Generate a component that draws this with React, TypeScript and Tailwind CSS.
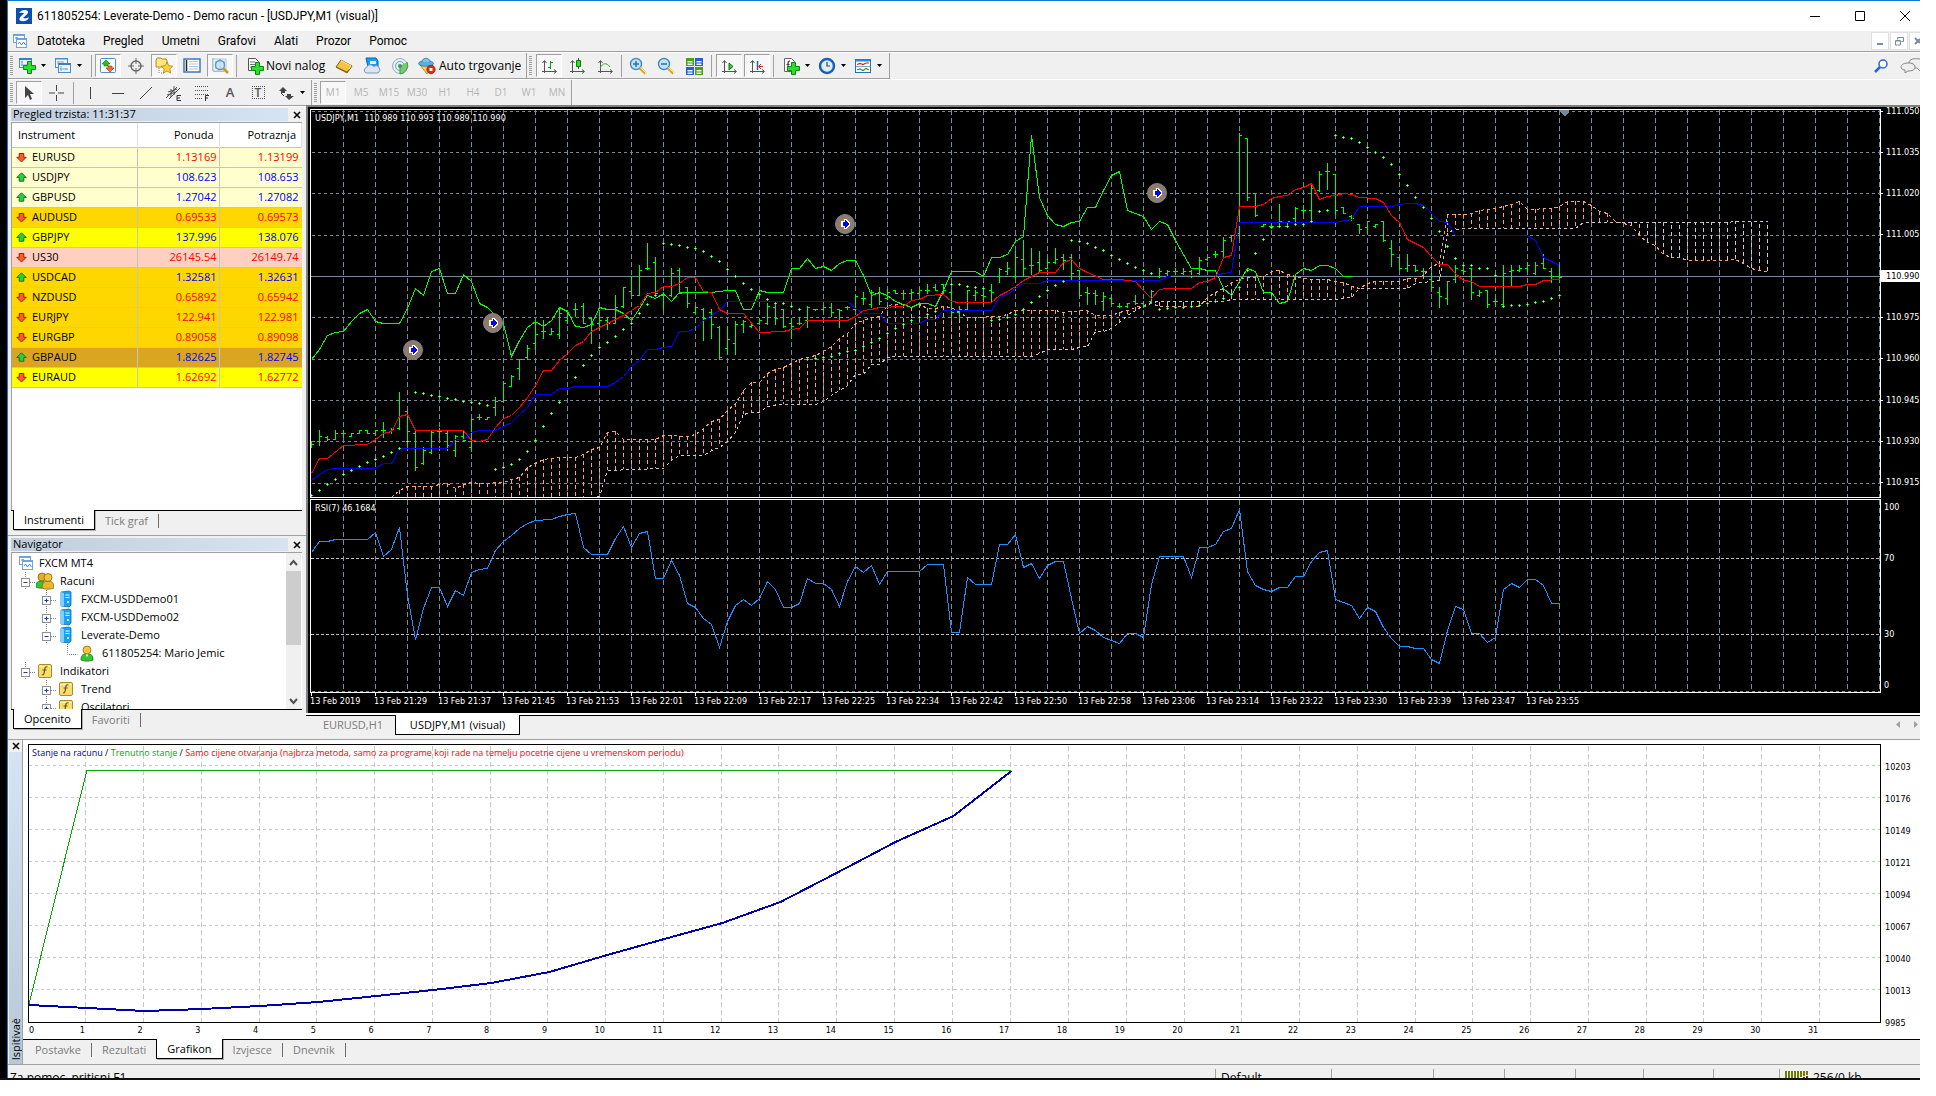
import React from "react";

type Pt = [number, number];

const parse = (s: string): Pt[] =>
  s.split(" ").map((p) => p.split(",").map(Number) as Pt);

const at = (pts: Pt[], i: number): number => {
  for (let k = 1; k < pts.length; k++) {
    const [x0, y0] = pts[k - 1];
    const [x1, y1] = pts[k];
    if (i >= x0 && i <= x1) return Math.round(y0 + ((y1 - y0) * (i - x0)) / (x1 - x0));
  }
  return 400;
};

const BAR = 8;
const toPoints = (pts: Pt[]) => pts.map(([i, y]) => `${i * BAR + 0.5},${y + 0.5}`).join(" ");

/* open, high, low, close for every one minute bar */
const BARS: number[][] = (
  "344,341,347,344 341,330,345,336 337,336,340,339 339,330,339,333 333,330,337,333 336,333,336,333 333,330,333,330 330,330,333,333 333,330,335,330 330,322,337,330 " +
  "331,328,333,329 328,292,329,316 311,311,345,331 333,331,370,367 363,347,364,350 352,331,353,332 331,328,337,331 333,331,350,345 350,335,356,336 336,330,341,340 " +
  "347,319,351,319 317,314,319,317 319,317,319,317 307,297,315,301 301,281,301,283 286,275,286,276 268,259,279,259 257,245,259,248 243,220,249,234 231,220,238,231 " +
  "234,228,234,231 234,207,238,213 220,212,223,214 209,203,216,209 206,203,223,223 218,217,243,224 223,212,228,220 220,217,229,223 223,195,223,207 206,187,207,187 " +
  "191,176,195,195 195,165,195,170 168,143,169,168 162,157,195,193 195,192,209,195 195,168,196,173 170,168,193,193 187,187,207,203 212,206,213,207 209,208,240,218 " +
  "212,209,238,224 227,226,259,257 248,226,254,239 243,221,254,224 224,220,232,221 226,222,227,225 223,218,224,220 223,203,224,206 207,205,224,218 209,209,227,226 " +
  "223,218,238,226 223,217,224,223 220,206,227,207 209,209,210,209 209,205,210,207 207,203,216,212 209,209,227,210 207,206,209,207 209,195,210,196 198,192,204,198 " +
  "204,190,207,192 193,187,204,201 198,189,199,192 190,190,193,193 193,190,199,193 193,189,199,192 193,187,195,190 190,184,193,190 187,184,190,190 184,184,193,190 " +
  "192,189,217,212 212,206,218,209 209,190,210,190 195,190,200,192 195,187,201,196 190,184,201,192 176,168,182,169 171,162,174,168 176,151,177,157 159,140,176,168 " +
  "165,148,174,165 162,151,171,170 168,159,168,162 162,148,163,159 157,154,169,160 157,154,180,173 170,170,196,195 192,187,204,193 193,190,204,195 201,192,210,196 " +
  "198,195,204,203 206,203,207,206 206,203,207,203 201,195,204,203 203,201,207,206 201,190,203,191 176,168,177,171 173,170,175,171 171,168,176,171 173,168,174,171 " +
  "171,170,177,175 173,157,174,160 159,157,160,157 154,151,157,154 151,137,156,140 137,135,141,135 133,33,138,35 38,38,100,97 93,93,116,115 126,124,126,124 " +
  "126,124,127,126 126,104,126,121 126,122,126,121 118,107,122,108 110,105,113,110 110,85,122,88 90,71,91,74 71,63,89,71 74,74,113,110 107,107,113,113 " +
  "116,115,120,118 124,124,133,129 127,121,133,121 126,124,127,124 121,121,141,140 148,140,166,154 157,157,169,168 168,154,171,165 165,165,171,170 171,168,174,171 " +
  "179,174,191,187 192,187,207,196 198,181,204,181 179,165,182,168 170,165,174,171 168,168,199,192 195,190,196,192 190,190,207,204 201,198,204,201 204,165,204,173 " +
  "171,165,185,170 170,165,171,168 168,162,171,165 173,162,174,165 163,154,168,168 171,168,182,176 176,165,180,177"
)
  .split(" ")
  .map((b) => b.split(",").map(Number));

const LAGGING = parse(
  "0,259 1,249 2,235 3,232 4,231 5,221 6,213 7,209 8,221 9,223 11,223 12,208 13,188 14,195 15,171 16,168 17,193 18,193 19,174 20,181 21,203 22,207 23,215 24,223 25,256 26,240 27,227 28,221 29,226 30,220 31,207 32,211 33,226 34,227 35,224 36,207 37,209 38,209 39,213 40,220 41,208 42,195 43,198 44,193 45,201 46,192 50,192 51,191 52,190 53,190 54,209 55,209 56,190 57,192 59,192 60,168 61,168 62,158 63,168 64,166 65,170 66,163 67,160 68,160 69,175 70,195 71,192 72,195 73,201 74,204 75,207 76,203 77,203 78,206 79,190 80,171 83,171 84,176 85,157 86,157 87,154 88,141 89,136 90,35 91,97 92,115 93,124 94,126 95,122 96,121 97,107 98,107 99,90 100,75 101,71 102,110 103,113 104,116 105,129 106,121 107,124 108,140 109,154 110,168 111,168 112,170 113,170 114,188 115,195 116,181 117,168 118,171 119,192 120,192 121,203 122,201 123,174 124,168 125,170 126,165 127,165 128,168 129,176 130,176",
);
const FAST = parse(
  "0,373 1,358 2,358 4,345 7,344 8,339 9,333 10,331 11,316 12,314 13,330 19,330 20,340 21,341 22,339 23,327 24,318 25,315 26,307 27,297 28,285 29,270 30,270 31,260 32,253 33,245 34,241 35,231 36,227 37,223 38,219 39,215 40,210 41,205 42,193 43,192 44,186 45,186 46,183 47,177 48,177 49,191 50,192 51,209 52,213 54,213 56,232 59,231 60,229 61,228 62,220 67,220 68,216 69,210 70,209 71,207 74,206 75,200 76,199 77,195 79,194 80,201 81,202 85,202 86,195 87,191 88,186 89,180 90,176 91,172 93,172 94,162 95,159 96,168 97,172 99,179 101,179 103,181 104,190 105,198 106,189 107,188 110,188 111,182 112,181 113,177 114,157 115,155 116,106 118,106 119,104 120,98 121,96 122,95 123,89 124,87 125,83 126,99 127,96 128,95 129,93 130,94 131,97 133,98 134,102 135,115 136,122 137,139 138,143 139,147 140,156 141,164 142,164 143,173 144,180 145,181 146,186 151,186 152,184 153,184 154,180 156,179",
);
const SLOW = parse(
  "0,380 1,374 2,369 3,368 8,368 9,363 10,363 11,348 17,348 18,339 19,339 20,332 21,330 23,330 24,326 25,322 26,314 27,307 28,294 30,294 31,288 32,288 33,286 37,286 38,282 39,276 40,266 41,260 42,249 43,249 44,247 45,246 46,231 47,231 48,228 49,220 50,215 51,210 52,201 67,201 68,208 69,213 71,213 72,223 76,223 77,219 78,219 79,210 85,210 86,197 87,194 88,188 89,183 91,183 92,180 106,180 107,176 108,175 113,175 114,173 115,172 116,122 128,122 130,119 131,106 135,106 136,104 137,103 138,103 139,105 140,113 141,121 142,122 143,135 152,135 153,140 154,157 155,161 156,165",
);
const SAR = parse(
  "0,395 1,390 2,384 3,379 4,374 5,370 6,366 7,362 8,359 9,356 10,352 11,348 12,341 13,292 14,293 15,295 16,296 17,298 18,299 19,301 20,302 21,303 22,305 23,369 24,367 25,364 26,359 27,351 28,340 29,326 30,313 31,302 33,277 34,265 35,255 36,247 37,242 38,236 39,229 40,223 41,213 42,204 43,195 44,143 45,144 46,145 47,147 48,148 49,151 50,156 51,161 52,169 53,176 54,183 55,189 56,194 57,199 58,203 59,203 60,206 61,209 62,259 63,258 64,257 65,256 66,253 67,251 68,250 69,246 70,242 71,238 72,233 73,228 74,224 75,220 76,217 77,214 78,211 80,184 81,184 82,186 83,187 84,188 85,220 86,219 87,217 88,214 89,209 90,202 91,196 92,190 93,185 94,181 95,140 96,141 97,143 98,147 99,150 100,155 101,159 102,163 103,167 104,170 105,173 106,209 107,208 108,207 109,207 110,206 111,205 112,203 113,201 114,198 115,194 116,187 117,170 118,153 119,139 120,127 121,126 122,126 123,124 124,124 125,121 126,111 127,110 128,35 129,37 130,38 131,42 132,47 133,52 134,57 135,64 136,74 137,85 138,97 139,107 140,118 141,131 142,146 143,158 144,165 145,165 146,168 147,168 148,175 149,206 150,205 151,205 152,204 153,202 154,201 155,198 156,195",
);
const SPAN_A = parse(
  "10,397 11,390 12,386 15,386 16,384 17,383 18,388 19,384 20,382 21,383 24,382 25,379 26,377 27,367 28,363 29,359 31,357 33,357 34,354 35,349 36,347 37,332 38,331 39,339 43,339 44,335 45,335 47,336 48,334 49,328 50,321 51,319 52,310 53,303 54,290 55,282 56,282 57,273 58,269 59,267 60,263 61,259 62,257 63,255 64,251 65,246 66,238 67,233 68,223 69,220 70,217 71,216 72,205 73,204 74,204 75,207 76,204 77,208 78,208 79,206 80,207 81,212 82,217 86,216 87,214 88,210 93,210 94,212 95,211 97,210 98,215 100,215 101,212 102,210 103,207 104,205 105,203 106,206 111,206 112,197 113,192 114,188 115,182 116,179 117,177 119,176 120,171 121,170 122,174 123,176 124,178 125,179 127,179 128,181 129,182 130,186 131,188 132,183 133,181 136,181 137,178 138,178 139,175 140,166 141,163 142,114 144,114 145,113 146,110 147,109 148,108 149,106 150,104 151,101 152,109 155,108 156,106 157,101 159,101 160,105 161,111 162,113 163,121 164,123 165,125 166,135 167,142 168,145 169,154 170,157 171,157 172,160 177,160 178,159 179,163 180,168 181,170 182,171",
);
const SPAN_B = parse(
  "10,420 34,420 35,397 36,396 37,370 44,368 45,360 46,355 49,355 50,350 51,347 52,341 53,332 54,314 55,312 56,312 57,306 59,304 63,304 64,301 65,295 66,290 67,285 68,274 69,274 70,264 71,264 72,257 73,256 90,256 91,253 92,249 95,249 96,247 97,246 98,231 99,231 100,228 101,222 102,215 103,210 104,205 105,202 106,201 114,201 115,199 128,199 129,198 130,197 131,188 137,188 138,183 139,182 140,181 141,180 142,132 143,129 144,128 158,128 159,122 177,122 178,121 182,121",
);
const RSI = parse(
  "0,62 1,51 2,51 3,49 7,49 8,42 9,66 10,59 11,37 12,105 13,149 14,118 15,97 16,97 17,116 18,100 19,105 20,82 21,79 22,78 23,60 24,51 25,45 26,38 27,33 28,30 30,29 31,26 32,24 33,23 34,57 35,64 37,64 38,48 39,36 40,57 41,43 42,41 43,88 44,88 45,70 46,85 47,113 48,117 49,128 50,134 51,157 52,131 53,115 54,109 55,115 56,108 57,91 58,99 59,117 60,117 61,113 62,88 63,93 64,93 65,99 66,116 67,91 68,76 69,82 70,75 71,94 72,81 76,81 77,74 79,74 80,142 81,142 82,87 83,94 85,94 86,54 87,54 88,44 89,77 90,73 91,88 92,75 93,71 94,71 95,108 96,143 97,136 98,140 99,147 100,150 101,153 102,143 103,143 104,147 105,94 106,66 109,66 110,87 111,57 112,57 113,54 114,41 115,38 116,19 117,81 118,95 119,99 120,101 121,97 122,97 123,86 124,86 125,71 126,62 127,60 128,109 129,112 130,115 131,128 132,117 133,121 134,137 135,148 136,156 137,156 138,158 139,158 140,169 141,173 142,140 143,116 144,119 145,143 146,143 147,152 148,147 149,99 150,93 151,97 152,89 153,89 154,95 155,113 156,113",
);
const HATCH = Array.from({ length: 172 }, (_, k) => k + 11);
const GRID_X = Array.from({ length: 100 }, (_, k) => (k + 1) * 32 + 0.5);
const GRID_Y = [11, 52, 93, 135, 176, 217, 259, 300, 341, 383];
const PRICES = ["111.050", "111.035", "111.020", "111.005", "110.990", "110.975", "110.960", "110.945", "110.930", "110.915"];
const TIMES = ["2019", "21:29", "21:37", "21:45", "21:53", "22:01", "22:09", "22:17", "22:25", "22:34", "22:42", "22:50", "22:58", "23:06", "23:14", "23:22", "23:30", "23:39", "23:47", "23:55"];

const QUOTES: { s: string; up: boolean; b: string; a: string; bg: string }[] = [
  { s: "EURUSD", up: false, b: "1.13169", a: "1.13199", bg: "bg-[#ffffce]" },
  { s: "USDJPY", up: true, b: "108.623", a: "108.653", bg: "bg-[#ffffce]" },
  { s: "GBPUSD", up: true, b: "1.27042", a: "1.27082", bg: "bg-[#ffffce]" },
  { s: "AUDUSD", up: false, b: "0.69533", a: "0.69573", bg: "bg-[#ffd700]" },
  { s: "GBPJPY", up: true, b: "137.996", a: "138.076", bg: "bg-[#ffff00]" },
  { s: "US30", up: false, b: "26145.54", a: "26149.74", bg: "bg-[#ffd0c0]" },
  { s: "USDCAD", up: true, b: "1.32581", a: "1.32631", bg: "bg-[#ffd700]" },
  { s: "NZDUSD", up: false, b: "0.65892", a: "0.65942", bg: "bg-[#ffd700]" },
  { s: "EURJPY", up: false, b: "122.941", a: "122.981", bg: "bg-[#ffd700]" },
  { s: "EURGBP", up: false, b: "0.89058", a: "0.89098", bg: "bg-[#ffd700]" },
  { s: "GBPAUD", up: true, b: "1.82625", a: "1.82745", bg: "bg-[#daa520]" },
  { s: "EURAUD", up: false, b: "1.62692", a: "1.62772", bg: "bg-[#ffff00]" },
];

/* ---------- icons ---------- */

function Icon({ children, w = 18 }: { children: React.ReactNode; w?: number }) {
  return (
    <svg width={w} height={18} viewBox={`0 0 ${w} 18`} fill="none" className="block shrink-0" aria-hidden="true">
      {children}
    </svg>
  );
}
const Plus = ({ x, y }: { x: number; y: number }) => (
  <path d={`M${x + 4} ${y}h4v4h4v4h-4v4h-4v-4h-4v-4h4z`} fill="#2ee02e" stroke="#0b8a0b" strokeWidth="1" />
);
const NewChart = () => (
  <Icon><rect x="1.500" y="1.500" width="12" height="9" fill="#eaf5ff" stroke="#4a8fc8" /><path d="M1 2h13" stroke="#3b7fbd" strokeWidth="2" /><path d="M4 4v5M3 8h8M3 5h2M9 7h2" stroke="#7ba6c9" /><Plus x={5.5} y={4.5} /></Icon>
);
const Profiles = () => (
  <Icon><rect x="1.500" y="1.500" width="12" height="9" fill="#eaf5ff" stroke="#4a8fc8" /><path d="M1 2h13" stroke="#4a8fc8" /><rect x="4.500" y="6.500" width="12" height="9" fill="#eaf5ff" stroke="#4a8fc8" /><path d="M4 7h13" stroke="#3b7fbd" strokeWidth="2" /><path d="M4 4v3M4 5h6M7 9v5M6 12h8M12 11v2" stroke="#7ba6c9" /></Icon>
);
const MarketIcon = () => (
  <Icon><rect x="1.500" y="1.500" width="15" height="14" rx="1" fill="#fff" stroke="#4a8fc8" /><path d="M7 3l4 4H9v2H5V7H3z" fill="#26c126" stroke="#0b7a0b" strokeWidth=".6" /><path d="M11 15l-4-4h2V9h4v2h2z" fill="#ff6a32" stroke="#a82c00" strokeWidth=".6" /></Icon>
);
const Target = () => (
  <Icon><circle cx="9" cy="9" r="5" stroke="#666" strokeWidth="1.400" /><path d="M9 1v6M9 11v6M1 9h6M11 9h6" stroke="#666" /></Icon>
);
const FolderStar = () => (
  <Icon><path d="M1 3.500V10h11V3.500L11 2H7L6 1H2z" fill="#ffe680" stroke="#b08a10" /><path d="M4 11v6M6 16h3" stroke="#777" strokeDasharray="1 1" /><path d="M12 5l1.800 3.700 4 .5-3 2.800.8 4-3.600-2-3.600 2 .8-4-3-2.800 4-.5z" fill="#ffd23a" stroke="#b0820c" strokeWidth=".8" /></Icon>
);
const DataWin = () => (
  <Icon><rect x="1" y="2" width="16" height="13" fill="#fff" stroke="#2f6fae" strokeWidth="1.400" /><path d="M3.500 3v11" stroke="#222" strokeWidth="1.500" /><path d="M6 4.500h9M6 7h9M6 9.500h9M6 12h9" stroke="#aac6e8" /></Icon>
);
const Tester = () => (
  <Icon><path d="M2 1v13h11" stroke="#7898b8" /><path d="M2 2h13v12H2z" fill="#e8f2fb" stroke="#9ab" strokeWidth=".6" /><path d="M5 4v8M9 2v10M13 4v6" stroke="#7898b8" /><circle cx="9" cy="8" r="4.500" fill="#c5e2f7" fillOpacity=".8" stroke="#5b93c2" strokeWidth="1.300" /><path d="M12 11l5 5" stroke="#c79a1c" strokeWidth="2.500" /></Icon>
);
const NewOrder = () => (
  <Icon><path d="M2.500 1.500h7l3 3v9h-10z" fill="#fff" stroke="#555" /><path d="M4 5h5M4 7.500h7M4 10h5" stroke="#777" /><Plus x={5.5} y={5.5} /></Icon>
);
const Gold = () => (
  <Icon><path d="M1 10L6 3l11 6-5 7z" fill="#f5c542" stroke="#8a5d0a" /><path d="M1 10l11 5 5-6" stroke="#8a5d0a" /><path d="M6 3.500l10 5.500-2 3" stroke="#ffe9a0" /></Icon>
);
const Cloud = () => (
  <Icon><path d="M3 1h10l2 3v6H5z" fill="#1e9bea" stroke="#0d62a8" /><path d="M7 4h6v3H7z" fill="#d8f0ff" /><path d="M3 16a3 3 0 01.6-5.600 4 4 0 017-1A3.500 3.500 0 0115 16z" fill="#dbe6f5" stroke="#7d95b8" /></Icon>
);
const Signal = () => (
  <Icon><circle cx="9" cy="9" r="7.500" fill="#e3eef2" stroke="#8fb3c4" /><circle cx="9" cy="9" r="4.500" stroke="#7aa4b8" /><path d="M9 9v8a8 8 0 006-3.500A8 8 0 0016 5" fill="#7cc67c" stroke="#3e9b3e" /><circle cx="9" cy="9" r="2" fill="#3a9a5a" /></Icon>
);
const Auto = () => (
  <Icon><path d="M2 8l7 9 6-9z" fill="#f7d451" stroke="#a8780f" strokeWidth=".8" /><ellipse cx="8" cy="6.500" rx="7.500" ry="2.800" fill="#5aaee2" stroke="#2873a8" strokeWidth=".8" /><path d="M4 5c0-5 8-5 8 0" fill="#7cc4ee" stroke="#2873a8" strokeWidth=".8" /><circle cx="13" cy="12.500" r="4.200" fill="#e02a12" stroke="#9c1400" strokeWidth=".7" /><path d="M11.500 11h3v3h-3z" fill="#fff" /></Icon>
);
const Axes = ({ children }: { children?: React.ReactNode }) => (
  <Icon><path d="M4.500 4v12M2 14.500h14M2.500 6l2-2.500 2 2.500M14 12.500l2.500 2-2.500 2" stroke="#555" />{children}</Icon>
);
const Lens = ({ plus }: { plus?: boolean }) => (
  <Icon><circle cx="7" cy="7" r="5.500" fill="#bfe3fa" stroke="#4689bf" strokeWidth="1.400" /><path d={plus ? "M4 7h6M7 4v6" : "M4 7h6"} stroke="#2a6fb0" strokeWidth="1.500" /><path d="M11 11l5.500 5.500" stroke="#d9a81f" strokeWidth="3" /><path d="M11.500 10.500l5.500 5.500" stroke="#fff0a8" /></Icon>
);
const Tiles = () => (
  <Icon><path d="M1 1h8v8H1zM10 10h8v8h-8z" fill="#4aa311" /><path d="M10 1h8v8h-8zM1 10h8v8H1z" fill="#2a5fd0" /><path d="M2.500 4h5v1.500h-5zM11.500 4h5v1.500h-5zM2.500 13h5v1.500h-5zM11.500 13h5v1.500h-5zM2.500 6.500h5V8h-5zM11.500 6.500h5V8h-5zM2.500 15.500h5V17h-5zM11.500 15.500h5V17h-5z" fill="#eef6ff" /></Icon>
);
const Indicators = () => (
  <Icon><path d="M2.500 1.500h7l3 3v10h-10z" fill="#fff" stroke="#666" /><path d="M8 4c-2 0-2 1-2 3v5M4.500 7.500h3" stroke="#444" strokeWidth="1.200" /><Plus x={5.5} y={5.5} /></Icon>
);
const Clock = () => (
  <Icon><circle cx="9" cy="9" r="7" fill="#dceffc" stroke="#1c5fb8" strokeWidth="2.500" /><path d="M9 5v4h3" stroke="#444" strokeWidth="1.200" /></Icon>
);
const Template = () => (
  <Icon><rect x="1.500" y="2.500" width="15" height="13" fill="#fff" stroke="#2f6fae" /><path d="M2 3.500h14" stroke="#3b82cc" strokeWidth="2" /><path d="M2 9.500h14" stroke="#7aa7d6" /><path d="M3 7.500l3-1 3 1 3-1.500h3" stroke="#b03020" strokeWidth="1.200" /><path d="M3 13l3-1 3 1.500 3-2 3 1.500" stroke="#2e9a2e" strokeWidth="1.200" /></Icon>
);
const Windows = () => (
  <Icon w={16}><rect x="1.500" y="2.500" width="11" height="8" fill="#fff" stroke="#6aa5dc" /><path d="M1 3h12" stroke="#6aa5dc" strokeWidth="2" /><path d="M3 6h3M5 5v4" stroke="#5a87b8" /><rect x="4.500" y="6.500" width="10" height="9" fill="#fff" stroke="#6aa5dc" /><path d="M4 7h11" stroke="#6aa5dc" strokeWidth="2" /><path d="M6 12l1.500-2 2 3 2-3 2 3" stroke="#5a87b8" /></Icon>
);
const Server = () => (
  <Icon><path d="M4 2l8-1 2 1v13l-2 2-8-1z" fill="#1ea0f2" stroke="#0b6ab5" strokeWidth=".8" /><path d="M4 2l3 1v13.500l-3-.5z" fill="#7cd0ff" /><path d="M8.500 5h4M8.500 7.500h4" stroke="#fff" /><circle cx="11" cy="12" r="1" fill="#fff" /></Icon>
);
const Person = () => (
  <Icon><path d="M3 16c0-6 3-6 6-6s6 0 6 6c-3 1.500-9 1.500-12 0z" fill="#37c437" stroke="#147a14" strokeWidth=".8" /><circle cx="9" cy="6" r="4" fill="#f6c537" stroke="#9a6d0a" strokeWidth=".8" /><path d="M7.500 10.500L9 13l1.500-2.500z" fill="#fff" /></Icon>
);
const People = () => (
  <Icon><path d="M0 15c0-5 2-6 5-6s5 1 5 6c-2 1.500-8 1.500-10 0z" fill="#37c437" stroke="#147a14" strokeWidth=".8" /><circle cx="6" cy="5" r="4" fill="#e0ae28" stroke="#8a620a" strokeWidth=".8" /><path d="M6 16c0-6 3-7 6-7s6 1 6 7c-3 1.500-9 1.500-12 0z" fill="#e6b82e" stroke="#8a620a" strokeWidth=".8" /><circle cx="12" cy="5.500" r="4" fill="#f6c537" stroke="#8a620a" strokeWidth=".8" /></Icon>
);
const Func = () => (
  <Icon><rect x="2.500" y="2.500" width="13" height="13" rx="1.500" fill="#f8dc74" stroke="#b08c20" /><path d="M3 4.500h12" stroke="#fff3b8" /><path d="M11.500 5c-2-.8-2.500.5-2.800 2.500L8 11.500c-.3 1.500-1 1.500-2 1M6.500 8h4" stroke="#6b5208" strokeWidth="1.200" /></Icon>
);
const QuoteArrow = ({ up }: { up: boolean }) => (
  <svg width="11" height="11" viewBox="0 0 11 11" className="block shrink-0" aria-hidden="true">
    {up ? (
      <path d="M5.500.8l4.700 4.700H7.800v3.700H3.200V5.500H.8z" fill="#2ecc40" stroke="#0d7a1c" strokeWidth="1" />
    ) : (
      <path d="M5.500 10L.8 5.300h2.400V1.500h4.600v3.800h2.400z" fill="#ff5a2a" stroke="#9a2400" strokeWidth="1" />
    )}
  </svg>
);
const CloseX = () => (
  <svg width="8" height="8" viewBox="0 0 8 8" aria-hidden="true"><path d="M1 1l6 6M7 1L1 7" stroke="#000" strokeWidth="1.600" /></svg>
);

/* ---------- toolbar parts ---------- */

const PRESS = "border border-t-[#a0a0a0] border-l-[#a0a0a0] border-r-white border-b-white bg-[#f7f7f7]";

function Tool({ label, on, children }: { label: string; on?: boolean; children: React.ReactNode }) {
  return (
    <button type="button" aria-label={label} className={`mx-px flex h-[23px] w-[26px] shrink-0 items-center justify-center ${on ? PRESS : ""}`}>
      {children}
    </button>
  );
}
const Caret = ({ label }: { label: string }) => (
  <button type="button" aria-label={label} className="-ml-1 flex h-[23px] w-3 shrink-0 items-center justify-center">
    <svg width="5" height="3" aria-hidden="true"><path d="M0 0h5L2.500 3z" fill="#000" /></svg>
  </button>
);
const Sep = () => <span className="mx-[2px] h-[22px] w-px shrink-0 bg-[#a0a0a0]" />;
const Grip = () => (
  <span className="ml-[2px] h-[19px] w-[3px] shrink-0 bg-[repeating-linear-gradient(to_bottom,#a0a0a0_0_1px,#efefef_1px_2px)]" />
);

function PaneHeader({ title }: { title: string }) {
  return (
    <div className="flex h-[14px] shrink-0 items-start pr-1">
      <h2 className="h-[13px] flex-1 bg-linear-to-r from-[#bfcddd] to-[#d5e3f2] pl-[2px] text-[11px] leading-[12px]">{title}</h2>
      <button type="button" aria-label={`Zatvori ${title}`} className="ml-1 flex h-[13px] w-[10px] items-center justify-center"><CloseX /></button>
    </div>
  );
}

function Tabs({ items, active }: { items: string[]; active: number }) {
  return (
    <div role="tablist" className="flex h-[21px] w-full items-start border-t border-black pl-[2px]">
      {items.map((t, i) =>
        i === active ? (
          <button key={t} role="tab" aria-selected="true" type="button" className="-mt-px h-5 border-x border-b border-black bg-white px-[10px] text-[11px] leading-[19px] shadow-[1px_1px_0_#b0b0b0]">{t}</button>
        ) : (
          <span key={t} className="flex h-[19px] items-center">
            <button role="tab" aria-selected="false" type="button" className="px-[10px] text-[11px] leading-[18px] text-[#7b7b7b]">{t}</button>
            {i + 1 !== active && <span className="h-[14px] w-px bg-[#6d6d6d]" />}
          </span>
        ),
      )}
    </div>
  );
}

/* ---------- left column ---------- */

function MarketWatch() {
  return (
    <section className="flex h-[428px] flex-col pt-px pb-1 pl-[3px]">
      <PaneHeader title="Pregled trzista: 11:31:37" />
      <div className="mr-1 flex-1 border-t border-l border-[#a0a0a0] bg-white">
        <table className="w-full table-fixed border-collapse text-[11px]">
          <thead>
            <tr className="h-6">
              <th scope="col" className="w-[125px] border-r border-[#e0e0e0] pl-[6px] text-left font-normal">Instrument</th>
              <th scope="col" className="w-[82px] border-r border-[#e0e0e0] pr-[5px] text-right font-normal">Ponuda</th>
              <th scope="col" className="border-r border-[#e0e0e0] pr-[5px] text-right font-normal">Potraznja</th>
            </tr>
          </thead>
          <tbody>
            {QUOTES.map((q) => (
              <tr key={q.s} className={`h-5 border-y border-[#c4c4c4] ${q.bg}`}>
                <td className="border-r border-[#c4c4c4] p-0 pl-1">
                  <span className="flex items-center gap-[5px] leading-[18px]"><QuoteArrow up={q.up} />{q.s}</span>
                </td>
                <td className={`border-r border-[#c4c4c4] p-0 pr-[2px] text-right leading-[18px] ${q.up ? "text-[#0000ff]" : "text-[#ff0000]"}`}>{q.b}</td>
                <td className={`p-0 pr-[3px] text-right leading-[18px] ${q.up ? "text-[#0000ff]" : "text-[#ff0000]"}`}>{q.a}</td>
              </tr>
            ))}
          </tbody>
        </table>
      </div>
      <div className="mr-1"><Tabs items={["Instrumenti", "Tick graf"]} active={0} /></div>
    </section>
  );
}

function Expander({ open }: { open: boolean }) {
  return (
    <button type="button" aria-label={open ? "Skupi" : "Prosiri"} className="flex w-[15px] shrink-0 items-center">
      <svg width="15" height="18" viewBox="0 0 15 18" aria-hidden="true">
        <path d="M4.500 0v18" stroke="#808080" strokeDasharray="1 1" />
        <path d="M9 10.500h6" stroke="#808080" strokeDasharray="1 1" />
        <rect x=".5" y="6.500" width="8" height="8" fill="#fff" stroke="#919191" />
        <path d={open ? "M2.500 10.500h4" : "M2.500 10.500h4M4.500 8.500v4"} stroke="#1b3f8b" />
      </svg>
    </button>
  );
}

function Node({ pad, open, icon, children, leaf }: { pad: string; open?: boolean; icon: React.ReactNode; children: string; leaf?: boolean }) {
  return (
    <li className={`flex h-[18px] items-center ${pad}`}>
      {leaf ? (
        <svg width="15" height="18" aria-hidden="true"><path d="M4.500 0v10.500h10" stroke="#808080" fill="none" strokeDasharray="1 1" /></svg>
      ) : (
        <Expander open={!!open} />
      )}
      {icon}
      <span className="ml-[6px] text-[11px] leading-[18px] whitespace-nowrap">{children}</span>
    </li>
  );
}

function Navigator() {
  return (
    <section className="flex h-[204px] flex-col border-t border-[#a0a0a0] pt-[2px] pl-[3px]">
      <PaneHeader title="Navigator" />
      <div className="mr-1 flex h-[157px] overflow-hidden border-t border-l border-[#a0a0a0] bg-white">
        <ul className="h-[156px] flex-1 overflow-hidden pt-px">
          <li className="flex h-[18px] items-center pl-[6px]"><Windows /><span className="ml-[5px] text-[11px] leading-[18px]">FXCM MT4</span></li>
          <Node pad="pl-[9px]" open icon={<People />}>Racuni</Node>
          <Node pad="pl-[30px]" icon={<Server />}>FXCM-USDDemo01</Node>
          <Node pad="pl-[30px]" icon={<Server />}>FXCM-USDDemo02</Node>
          <Node pad="pl-[30px]" open icon={<Server />}>Leverate-Demo</Node>
          <Node pad="pl-[51px]" leaf icon={<Person />}>611805254: Mario Jemic</Node>
          <Node pad="pl-[9px]" open icon={<Func />}>Indikatori</Node>
          <Node pad="pl-[30px]" icon={<Func />}>Trend</Node>
          <Node pad="pl-[30px]" icon={<Func />}>Oscilatori</Node>
        </ul>
        <div className="mr-px flex w-[15px] flex-col items-center justify-between bg-[#f0f0f0]">
          <svg width="15" height="18" aria-hidden="true"><path d="M4 12l3.500-4 3.500 4" stroke="#505050" strokeWidth="2" fill="none" /></svg>
          <div className="h-[74px] w-full bg-[#cdcdcd]" />
          <span className="flex-1" />
          <svg width="15" height="16" aria-hidden="true"><path d="M4 6l3.500 4L11 6" stroke="#505050" strokeWidth="2" fill="none" /></svg>
        </div>
      </div>
      <div className="mr-1"><Tabs items={["Opcenito", "Favoriti"]} active={0} /></div>
    </section>
  );
}

/* ---------- price chart ---------- */

const MARKS: Pt[] = [[102, 250], [182, 223], [534, 124], [846, 93]];

function PricePlot() {
  return (
    <svg className="block h-[387px] w-full" shapeRendering="crispEdges" fill="none" role="img" aria-label="USDJPY M1">
      <g transform="translate(0,-10)">
        <g stroke="#778899">
          {GRID_X.map((x) => <path key={x} d={`M${x} 10V398`} strokeDasharray="5 3" />)}
          {GRID_Y.map((y) => <path key={y} d={`M1 ${y + 0.5}H4000`} strokeDasharray="3 3" />)}
          <path d="M0 176.500H4000" />
        </g>
        {HATCH.map((i) => {
          const a = at(SPAN_A, i);
          const b = at(SPAN_B, i);
          return <path key={i} d={`M${i * BAR + 0.5} ${a}V${b}`} stroke={a < b ? "#f4a460" : "#d8bfd8"} strokeDasharray="4 3" />;
        })}
        <polyline points={toPoints(SPAN_B)} stroke="#d8bfd8" strokeDasharray="3 3" />
        <polyline points={toPoints(SPAN_A)} stroke="#f4a460" strokeDasharray="3 3" />
        <g stroke="#00ff00">
          {BARS.map(([o, h, l, c], i) => (
            <path key={i} d={`M${i * BAR + 0.5} ${h}V${l + 1}M${i * BAR - 2} ${o + 0.5}h2M${i * BAR + 1} ${c + 0.5}h2`} />
          ))}
        </g>
        <polyline points={toPoints(LAGGING)} stroke="#00ff00" />
        <polyline points={toPoints(SLOW)} stroke="#0000ff" />
        <polyline points={toPoints(FAST)} stroke="#ff0000" />
        <g>
          {SAR.map(([i, y]) => (
            <g key={i}>
              <path d={`M${i * BAR - 1} ${y + 0.5}h3M${i * BAR + 0.5} ${y - 1}v3`} stroke="#00ff00" />
              <path d={`M${i * BAR} ${y + 0.5}h1`} stroke="#e8ffe8" />
            </g>
          ))}
        </g>
        {MARKS.map(([x, y]) => (
          <g key={x} transform={`translate(${x},${y})`}>
            <circle r="9.500" fill="#8f7b6b" stroke="#778899" shapeRendering="auto" />
            <path d="M-4-3h3v-2h2l4 4v2l-4 4h-2v-2h-3z" fill="#fff" />
            <path d="M-2-2h2v-2l4 4-4 4v-2h-2z" fill="#0000ff" />
          </g>
        ))}
        <path d="M1249 10h9v2l-4 4h-1l-4-4z" fill="#778899" />
      </g>
    </svg>
  );
}

function RsiPlot() {
  return (
    <svg className="block h-[192px] w-full" shapeRendering="crispEdges" fill="none" role="img" aria-label="RSI">
      <g transform="translate(0,-10)">
        <g stroke="#778899">
          {GRID_X.map((x) => <path key={x} d={`M${x} 10V202`} strokeDasharray="5 3" />)}
          <path d="M1 201.500H4000" strokeDasharray="3 3" />
        </g>
        <path d="M0 68.500H4000M0 144.500H4000" stroke="#c0c0c0" strokeDasharray="3 2" />
        <polyline points={toPoints(RSI)} stroke="#1e90ff" />
      </g>
    </svg>
  );
}

const AxisLabel = ({ children }: { children: string }) => (
  <span className="flex h-2 items-center text-[9px] leading-[9px]"><i className="mr-[3px] h-px w-[2px] bg-white" />{children}</span>
);

function ChartWindow() {
  return (
    <section className="border-t-2 border-l-2 border-[#808080] font-['DejaVu_Sans_Condensed','Open_Sans',sans-serif]">
      <div className="flex bg-black pl-[2px] text-white">
        <div className="min-w-0 flex-1 pt-[2px]">
          <div className="relative border border-white">
            <PricePlot />
            <p className="absolute top-[2px] left-1 text-[9px] leading-[12px] whitespace-pre">USDJPY,M1  110.989 110.993 110.989 110.990</p>
          </div>
          <div className="relative mt-px border border-white">
            <RsiPlot />
            <p className="absolute top-[2px] left-1 text-[9px] leading-[12px]">RSI(7) 46.1684</p>
          </div>
          <div className="flex h-[20px] overflow-hidden">
            {TIMES.map((t) => (
              <span key={t} className="w-16 shrink-0 text-[9px] leading-[11px] whitespace-nowrap">
                <i className="ml-px block h-[3px] w-px bg-white" />13 Feb {t}
              </span>
            ))}
          </div>
        </div>
        <div className="w-[39px] shrink-0">
          <div className="flex h-[392px] flex-col">
            <div className="flex h-[380px] flex-col justify-between">
              {PRICES.map((p, i) =>
                i === 4 ? (
                  <span key={p} className="-my-[2px] flex h-3 items-center bg-white pl-[5px] text-[9px] leading-[12px] text-black">{p}</span>
                ) : (
                  <AxisLabel key={p}>{p}</AxisLabel>
                ),
              )}
            </div>
          </div>
          <div className="flex flex-col pt-1 pl-[3px] text-[9px] leading-[8px]">
            <span>100</span>
            <span className="mt-[43px]">70</span>
            <span className="mt-[68px]">30</span>
            <span className="mt-[43px]">0</span>
          </div>
        </div>
      </div>
    </section>
  );
}

function ChartTabs() {
  return (
    <div className="flex h-[26px] items-start border-t-2 border-white bg-[#f0f0f0]">
      <div role="tablist" className="flex h-[22px] flex-1 items-start border-t border-black pl-[5px]">
        <button type="button" role="tab" aria-selected="false" className="w-[84px] text-[11px] leading-[18px] text-[#7b7b7b]">EURUSD,H1</button>
        <button type="button" role="tab" aria-selected="true" className="-mt-px h-5 w-[125px] border-x border-b border-black bg-white text-[11px] leading-[18px]">USDJPY,M1 (visual)</button>
        <span className="ml-auto flex gap-[12px] pt-[5px] pr-[1px]">
          <button type="button" aria-label="Lijevo"><svg width="6" height="8" aria-hidden="true"><path d="M5 0v7L1 3.500z" fill="#a0a0a0" /></svg></button>
          <button type="button" aria-label="Desno"><svg width="6" height="8" aria-hidden="true"><path d="M1 0v7l4-3.500z" fill="#a0a0a0" /></svg></button>
        </span>
      </div>
    </div>
  );
}

/* ---------- tester panel ---------- */

const STEP = 57.75;
const BALANCE = [260, 263, 266, 264, 261, 257, 251, 245, 238, 227, 210, 194, 178, 157, 127, 97, 71, 26];

function TesterPanel() {
  return (
    <section className="flex h-[325px] border-t border-[#a0a0a0]">
      <div className="flex w-[14px] shrink-0 flex-col items-center pl-px">
        <button type="button" aria-label="Zatvori" className="flex h-[12px] items-center"><CloseX /></button>
        <div className="flex w-[13px] flex-1 items-end justify-center overflow-hidden bg-linear-to-t from-[#b9c8d8] to-[#d5e3f2] pb-1">
          <h2 className="rotate-180 text-[11px] leading-[13px] [writing-mode:vertical-rl]">Ispitivaè</h2>
        </div>
      </div>
      <div className="flex min-w-0 flex-1 flex-col border-l border-[#a0a0a0]">
        <div className="flex bg-white pt-[4px] pl-[5px] font-['DejaVu_Sans_Condensed','Open_Sans',sans-serif]">
          <div className="min-w-0 flex-1">
            <div className="relative border border-black">
              <svg className="block h-[277px] w-full" viewBox="0 0 1850 277" preserveAspectRatio="none" fill="none" shapeRendering="crispEdges" role="img" aria-label="Stanje na racunu">
                <g stroke="#c8c8c8">
                  {Array.from({ length: 31 }, (_, k) => Math.floor((k + 1) * STEP) - 0.5).map((x) => (
                    <path key={x} d={`M${x} 1V277`} strokeDasharray="5 3" />
                  ))}
                  {Array.from({ length: 8 }, (_, k) => 20.5 + 32 * k).map((y) => (
                    <path key={y} d={`M0 ${y}H1850`} strokeDasharray="3 3" />
                  ))}
                </g>
                <path d={`M0 259L${STEP} 25.500H${17 * STEP}`} stroke="#00aa00" />
                <polyline points={BALANCE.map((y, i) => `${Math.round(i * STEP)},${y}`).join(" ")} stroke="#0000b0" strokeWidth="2" />
              </svg>
              <p className="absolute top-[2px] left-[3px] font-['Open_Sans',sans-serif] text-[9px] leading-[12px] whitespace-nowrap">
                <span className="text-[#0000b0]">Stanje na racunu</span> / <span className="text-[#00aa00]">Trenutno stanje</span> /{" "}
                <span className="text-[#ff0000]">Samo cijene otvaranja (najbrza metoda, samo za programe koji rade na temelju pocetne cijene u vremenskom periodu)</span>
              </p>
            </div>
            <div className="flex h-4 pr-[3px] text-[9px] leading-[15px]">
              <span className="w-0 pl-px">0</span>
              {Array.from({ length: 32 }, (_, k) => (
                <span key={k} className="min-w-0 flex-1 pr-[2px] text-right">{k < 31 ? k + 1 : ""}</span>
              ))}
            </div>
          </div>
          <div className="flex h-[285px] w-[39px] shrink-0 flex-col justify-between pt-[17px] text-[9px] leading-[12px]">
            {["10203", "10176", "10149", "10121", "10094", "10067", "10040", "10013", "9985"].map((v) => (
              <span key={v} className="pl-1">{v}</span>
            ))}
          </div>
        </div>
        <Tabs items={["Postavke", "Rezultati", "Grafikon", "Izvjesce", "Dnevnik"]} active={2} />
      </div>
    </section>
  );
}

/* ---------- page ---------- */

export default function App() {
  return (
    <div className="min-h-screen bg-white pr-4 font-['Open_Sans','Noto_Sans',sans-serif] text-[11px] text-black">
      <div className="flex border-b-2 border-[#111] bg-black pl-[7px]">
        <main className="min-w-0 flex-1 border-t border-l border-[#0f78d0] bg-[#f0f0f0]">
          <header className="flex h-[30px] items-center bg-white pl-2">
            <svg width="16" height="16" viewBox="0 0 16 16" aria-hidden="true">
              <rect width="16" height="16" fill="#0b4fae" />
              <path d="M3 5c2-3.500 8-4 9-1.500.8 2-3 4.500-5 6.500 2 .8 4 .3 6-.7-1 4-6.500 5-9.500 3-.8-2.500 2.500-5 4.800-7C6.500 4.500 5 4.500 3 5z" fill="#fff" />
            </svg>
            <h1 className="ml-[5px] flex-1 font-['Roboto','Open_Sans',sans-serif] text-[12px] leading-[16px]">611805254: Leverate-Demo - Demo racun - [USDJPY,M1 (visual)]</h1>
            <div className="flex items-center">
              <button type="button" aria-label="Minimiziraj" className="flex w-[45px] justify-center"><svg width="10" height="10" aria-hidden="true"><path d="M0 5.500h10" stroke="#000" /></svg></button>
              <button type="button" aria-label="Maksimiziraj" className="flex w-[45px] justify-center"><svg width="10" height="10" aria-hidden="true"><path d="M.5.500h9v9h-9z" stroke="#000" fill="none" /></svg></button>
              <button type="button" aria-label="Zatvori" className="mr-[-7px] flex w-[45px] justify-center"><svg width="10" height="10" aria-hidden="true"><path d="M0 0l10 10M10 0L0 10" stroke="#000" /></svg></button>
            </div>
          </header>
          <nav className="flex h-[21px] items-center border-b border-[#a0a0a0] pl-1">
            <Windows />
            <div className="flex font-['Roboto','Open_Sans',sans-serif] text-[12px] leading-[20px]">
              {["Datoteka", "Pregled", "Umetni", "Grafovi", "Alati", "Prozor", "Pomoc"].map((m) => (
                <button key={m} type="button" className="px-[9px]">{m}</button>
              ))}
            </div>
            <div className="ml-auto flex gap-px overflow-hidden">
              <button type="button" aria-label="Minimiziraj graf" className="flex h-[18px] w-[18px] items-center justify-center border border-[#e0e0e0] bg-white"><svg width="8" height="8" aria-hidden="true"><path d="M1 7h6" stroke="#7a8ba0" strokeWidth="2" /></svg></button>
              <button type="button" aria-label="Obnovi graf" className="flex h-[18px] w-[18px] items-center justify-center border border-[#e0e0e0] bg-white"><svg width="9" height="9" aria-hidden="true"><path d="M2.500 2.500v-2h6v4h-2M.5 4h5v4h-5zM.5 3.500h5" stroke="#7a8ba0" fill="none" /></svg></button>
              <button type="button" aria-label="Zatvori graf" className="flex h-[18px] w-[11px] items-center justify-end border border-r-0 border-[#e0e0e0] bg-white"><svg width="6" height="8" aria-hidden="true"><path d="M1 1l5 5M6 2L1 7" stroke="#7a8ba0" strokeWidth="2" /></svg></button>
            </div>
          </nav>
          <div className="flex h-[27px] items-start border-t border-white">
            <div className="flex h-[26px] items-center border-r border-b border-[#a0a0a0]">
              <Grip />
              <Tool label="Novi graf"><NewChart /></Tool>
              <Caret label="Izbor grafa" />
              <Tool label="Profili"><Profiles /></Tool>
              <Caret label="Izbor profila" />
              <span className="w-1" /><Sep />
              <Tool label="Pregled trzista" on><MarketIcon /></Tool>
              <Tool label="Prozor podataka"><Target /></Tool>
              <Tool label="Navigator" on><FolderStar /></Tool>
              <Tool label="Terminal"><DataWin /></Tool>
              <Tool label="Ispitivac" on><Tester /></Tool>
              <Sep />
              <button type="button" className="flex w-[91px] items-center gap-[2px] pl-[7px] text-[12px] leading-[18px] whitespace-nowrap"><NewOrder />Novi nalog</button>
              <Tool label="MetaEditor"><Gold /></Tool>
              <Tool label="VPS"><Cloud /></Tool>
              <Tool label="Signali"><Signal /></Tool>
              <button type="button" className="flex w-[112px] items-center gap-[3px] pl-1 text-[12px] leading-[18px] whitespace-nowrap"><Auto />Auto trgovanje</button>
            </div>
            <div className="flex h-[26px] items-center border-r border-b border-[#a0a0a0]">
              <Grip />
              <span className="w-[3px]" />
              <Tool label="Stupci" on><Axes><path d="M10.500 4v8M8 10.500h2M11 5.500h2" stroke="#0a9a0a" /></Axes></Tool>
              <Tool label="Svijece"><Axes><path d="M10.500 1v11" stroke="#0a7a0a" /><path d="M8.500 3.500h4v6h-4z" fill="#2ee02e" stroke="#0a7a0a" /></Axes></Tool>
              <Tool label="Linija"><Axes><path d="M4 11c3-5 6-6 10-1" stroke="#3aa03a" /></Axes></Tool>
              <Sep />
              <Tool label="Povecaj"><Lens plus /></Tool>
              <Tool label="Smanji"><Lens /></Tool>
              <Tool label="Poredaj"><Tiles /></Tool>
              <span className="w-px" /><Sep /><span className="w-px" />
              <Tool label="Automatsko pomicanje" on><Axes><path d="M9 6v7l4-3.500z" fill="#2ecc2e" stroke="#0a7a0a" /></Axes></Tool>
              <Tool label="Pomak grafa" on><Axes><path d="M9.500 4v9" stroke="#1b6fa8" strokeWidth="1.500" /><path d="M15 9.500h-4M13 7l-2.500 2.500L13 12" stroke="#c03010" /></Axes></Tool>
              <Sep /><span className="w-px" />
              <Tool label="Indikatori"><Indicators /></Tool>
              <Caret label="Izbor indikatora" />
              <Tool label="Razdoblja"><Clock /></Tool>
              <Caret label="Izbor razdoblja" />
              <Tool label="Predlosci"><Template /></Tool>
              <Caret label="Izbor predloska" />
              <span className="w-1" />
            </div>
            <div className="ml-auto flex items-center gap-[12px] overflow-hidden pt-[5px]">
              <button type="button" aria-label="Trazi"><svg width="14" height="14" aria-hidden="true"><circle cx="9" cy="5" r="4" fill="#fff" stroke="#2a62d8" strokeWidth="1.500" /><path d="M6 8l-5 5" stroke="#2a62d8" strokeWidth="2.500" /></svg></button>
              <button type="button" aria-label="Poruke"><svg width="20" height="15" aria-hidden="true" fill="#eee" stroke="#888"><path d="M20 1c-6-1-11 0-11 4s3 5 8 5l3 3" /><path d="M8 5c4 0 7 1 7 4s-3 4-7 4l-3 2v-3c-3 0-4-2-4-3s1-4 7-4z" /></svg></button>
            </div>
          </div>
          <div className="flex h-[26px] items-start border-t border-white">
            <div className="flex h-[25px] items-center border-r border-[#a0a0a0]">
              <Grip />
              <span className="w-[2px]" />
              <Tool label="Pokazivac" on><Icon><path d="M5 2v12l3-3 2 5 2-1-2-5h4z" fill="#444" /></Icon></Tool>
              <Tool label="Kriz"><Icon><path d="M8.500 1v6M8.500 11v6M1 9h6M10 9h6" stroke="#444" /></Icon></Tool>
              <Sep />
              <Tool label="Okomita linija"><Icon><path d="M9.500 3v12" stroke="#444" /></Icon></Tool>
              <Tool label="Vodoravna linija"><Icon><path d="M3 9.500h12" stroke="#444" /></Icon></Tool>
              <Tool label="Linija trenda"><Icon><path d="M3 15L15 3" stroke="#444" /></Icon></Tool>
              <Tool label="Kanal"><Icon><path d="M1 14L12 3M4 15L15 4M3 8l9-3M2 11l9-3M6 5v8M9 2v9" stroke="#555" /><path d="M16 11.500h-4v5h4M12 14h3" stroke="#333" /></Icon></Tool>
              <Tool label="Fibonacci"><Icon><path d="M2 2.500h14M2 6.500h14M2 10.500h14M2 14.500h8" stroke="#555" strokeDasharray="1 1" /><path d="M16 11.500h-3.500V17M12.500 14H15" stroke="#333" /></Icon></Tool>
              <Tool label="Tekst"><span className="text-[13px] font-semibold text-[#555]">A</span></Tool>
              <Tool label="Oznaka"><span className="flex h-[13px] w-[13px] items-center justify-center border border-dotted border-[#555] text-[12px] font-semibold text-[#555]">T</span></Tool>
              <Tool label="Strelice"><Icon><path d="M6 3l4 4H8v2H4V7H2zM12 16l-4-4h2v-2h4v2h3z" fill="#444" /><path d="M4 9l3 3" stroke="#444" /></Icon></Tool>
              <Caret label="Izbor strelica" />
              <span className="w-[3px]" />
            </div>
            <div className="flex h-[25px] items-center border-r border-[#a0a0a0]">
              <Grip />
              <span className="w-[2px]" />
              {["M1", "M5", "M15", "M30", "H1", "H4", "D1", "W1", "MN"].map((t, i) => (
                <Tool key={t} label={t} on={i === 0}><span className="text-[10px] text-[#b4b4b4]">{t}</span></Tool>
              ))}
            </div>
          </div>
          <div className="flex">
            <aside className="w-[298px] shrink-0 border-t border-[#a0a0a0]">
              <div className="h-px bg-white" />
              <MarketWatch />
              <Navigator />
            </aside>
            <div className="min-w-0 flex-1">
              <ChartWindow />
              <ChartTabs />
            </div>
          </div>
          <TesterPanel />
          <footer className="flex h-[14px] items-start overflow-hidden border-t border-[#a0a0a0] text-[12px] leading-[18px]">
            <span className="flex-1 pt-[4px] pl-[2px]">Za pomoc, pritisni F1</span>
            <span className="mt-1 w-[116px] border-l border-[#a0a0a0] pl-[5px]">Default</span>
            <span className="mt-1 h-4 w-[102px] border-l border-[#a0a0a0]" />
            <span className="mt-1 h-4 w-[71px] border-l border-[#a0a0a0]" />
            <span className="mt-1 h-4 w-[71px] border-l border-[#a0a0a0]" />
            <span className="mt-1 h-4 w-[68px] border-l border-[#a0a0a0]" />
            <span className="mt-1 h-4 w-[70px] border-l border-[#a0a0a0]" />
            <span className="mt-1 h-4 w-[66px] border-l border-[#a0a0a0]" />
            <span className="mt-1 flex w-[141px] gap-1 border-l border-[#a0a0a0] pl-[5px]">
              <svg width="24" height="12" className="mt-[2px]" aria-hidden="true"><path d="M1 0v12M4 0v12M7 0v12M10 0v12M13 0v7M16 0v6M19 0v5M22 0v4" stroke="#6b8000" strokeWidth="2" /><path d="M13 9v3M16 7v5M19 6v6M22 5v7" stroke="#9a1010" strokeWidth="2" /></svg>
              256/0 kb
            </span>
          </footer>
        </main>
      </div>
    </div>
  );
}
